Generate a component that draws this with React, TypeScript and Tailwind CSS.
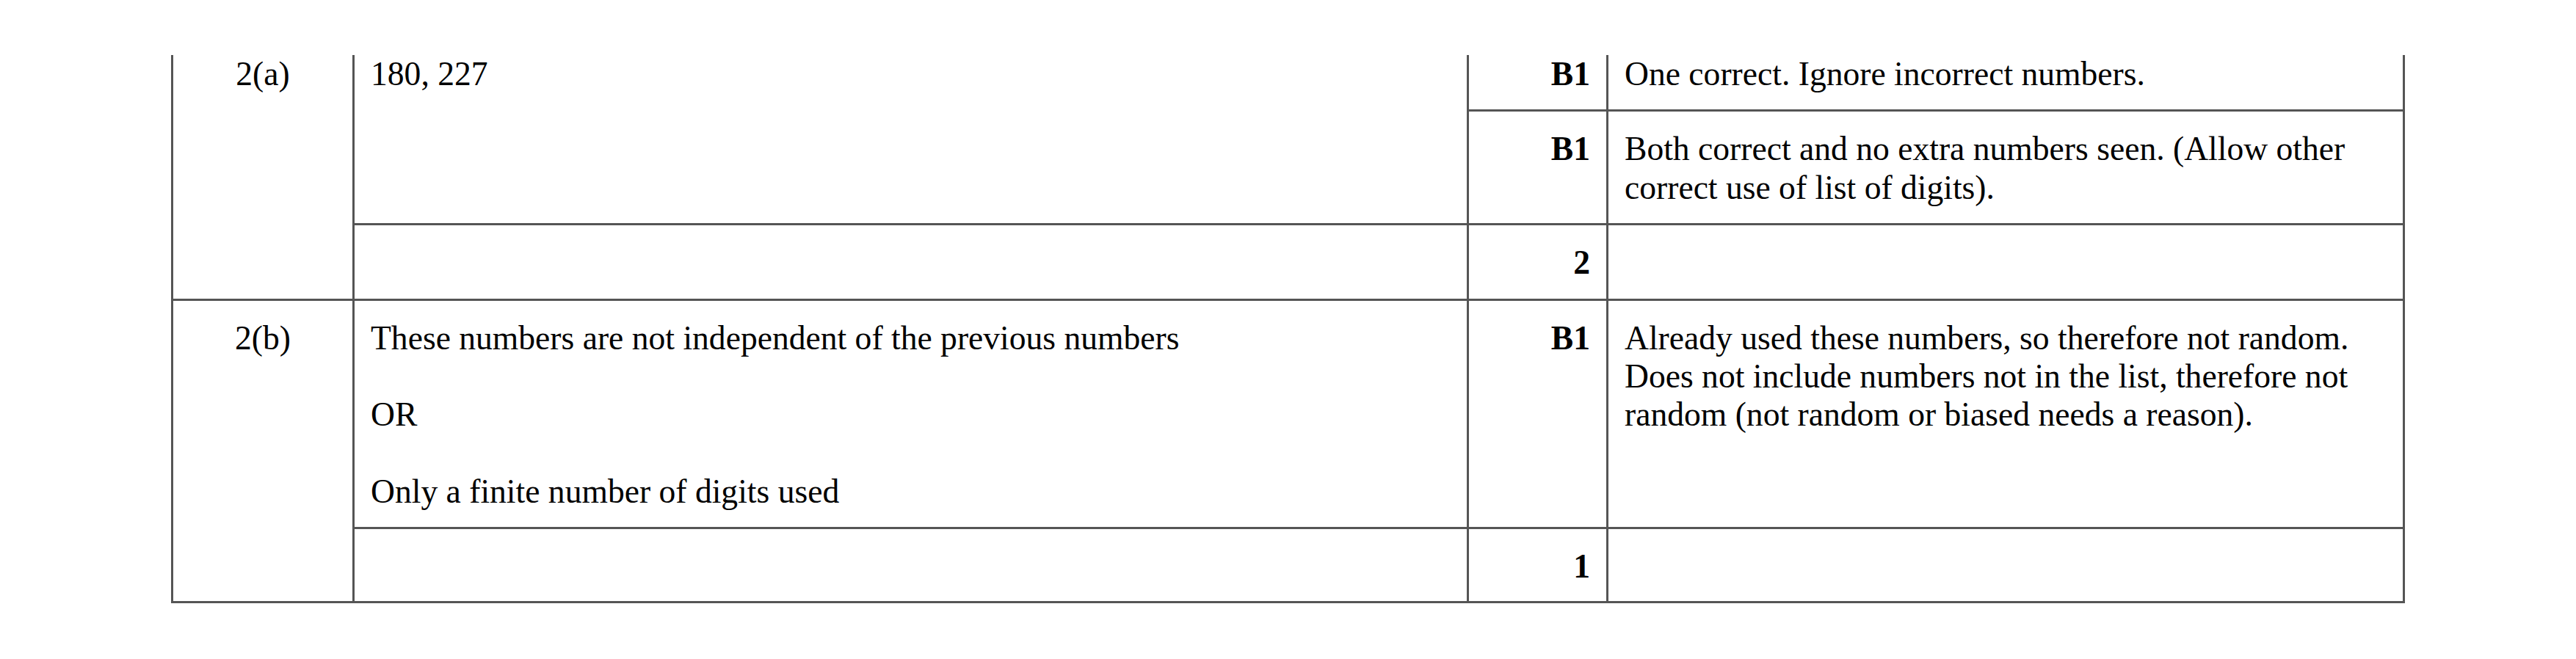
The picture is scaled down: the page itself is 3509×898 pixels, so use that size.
const cell = "border-[3px] border-[#555] align-top px-[22px] pt-[25px] pb-[22px]";
const cellB = "border-[3px] border-[#555] align-top px-[22px] pt-[25px] pb-[21px]";
const firstCell = "border-[3px] border-t-0 border-[#555] align-top px-[22px] pt-0 pb-[22px]";

export default function App() {
  return (
    <div className="min-h-screen bg-white pt-[75px] text-black font-['Liberation_Serif',_'Times_New_Roman',_serif] text-[45.6px] leading-[52.4px]">
      <table className="mx-auto w-[3040px] table-fixed border-collapse">
        <colgroup>
          <col className="w-[247px]" />
          <col className="w-[1518px]" />
          <col className="w-[190px]" />
          <col className="w-[1085px]" />
        </colgroup>
        <tbody>
          {/* 2(a) */}
          <tr>
            <td rowSpan={3} className={`${firstCell} text-center`}>
              2(a)
            </td>
            <td rowSpan={2} className={firstCell}>
              180, 227
            </td>
            <td className={`${firstCell} text-right font-bold`}>B1</td>
            <td className={firstCell}>One correct. Ignore incorrect numbers.</td>
          </tr>
          <tr>
            <td className={`${cell} text-right font-bold`}>B1</td>
            <td className={cell}>
              Both correct and no extra numbers seen. (Allow other correct use of list of digits).
            </td>
          </tr>
          <tr>
            <td className={cell}></td>
            <td className={`${cell} text-right font-bold`}>2</td>
            <td className={cell}></td>
          </tr>

          {/* 2(b) */}
          <tr>
            <td rowSpan={2} className={`${cellB} text-center`}>
              2(b)
            </td>
            <td className={cellB}>
              <div className="flex flex-col gap-[52.4px]">
                <p>These numbers are not independent of the previous numbers</p>
                <p>OR</p>
                <p>Only a finite number of digits used</p>
              </div>
            </td>
            <td className={`${cellB} text-right font-bold`}>B1</td>
            <td className={cellB}>
              Already used these numbers, so therefore not random. Does not include numbers not in the
              list, therefore not random (not random or biased needs a reason).
            </td>
          </tr>
          <tr>
            <td className={cellB}></td>
            <td className={`${cellB} text-right font-bold`}>1</td>
            <td className={cellB}></td>
          </tr>
        </tbody>
      </table>
    </div>
  );
}
